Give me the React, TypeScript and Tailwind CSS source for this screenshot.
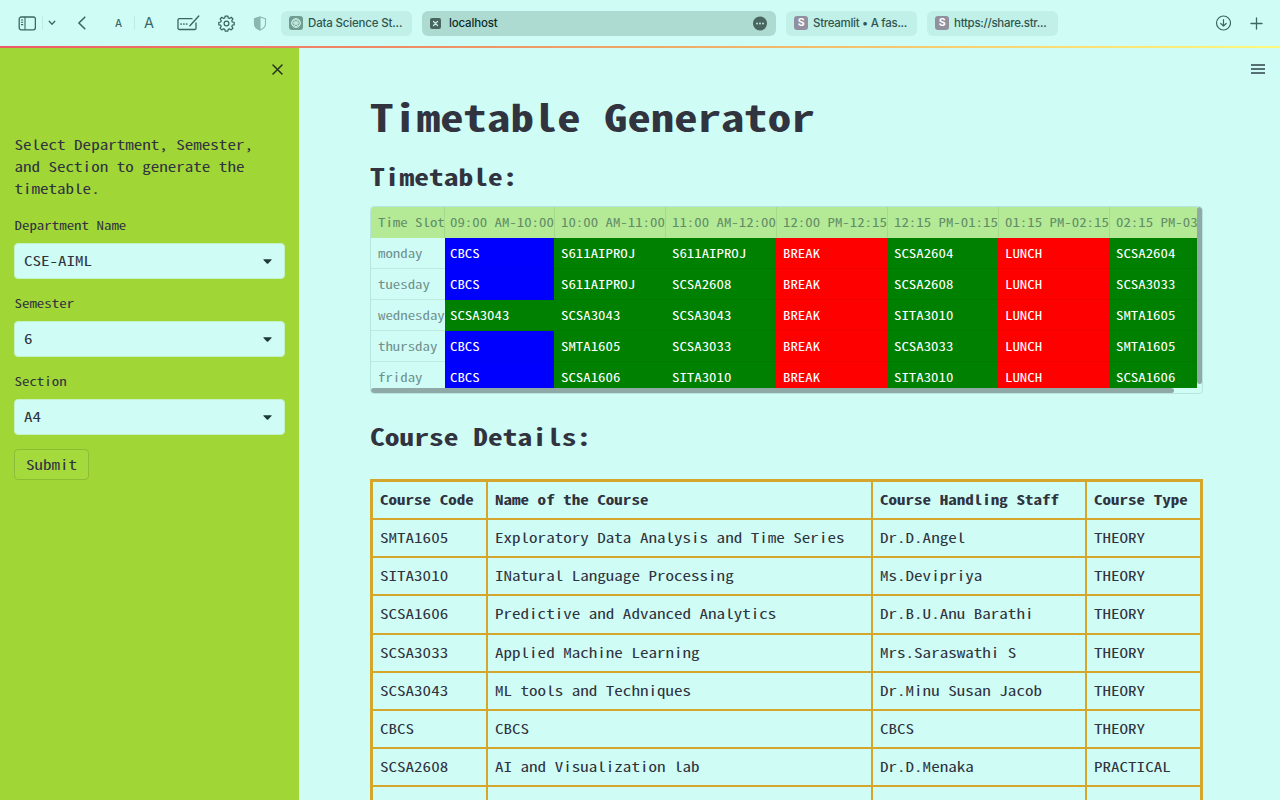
import React from "react";

const MONO = "font-['Noto_Sans_Mono_CJK_SC','Noto_Sans_Mono','DejaVu_Sans_Mono',monospace]";

const slots = [
  "09:00 AM-10:00",
  "10:00 AM-11:00",
  "11:00 AM-12:00",
  "12:00 PM-12:15",
  "12:15 PM-01:15",
  "01:15 PM-02:15",
  "02:15 PM-03",
];

const days: { day: string; cells: string[] }[] = [
  { day: "monday", cells: ["CBCS", "S611AIPROJ", "S611AIPROJ", "BREAK", "SCSA2604", "LUNCH", "SCSA2604"] },
  { day: "tuesday", cells: ["CBCS", "S611AIPROJ", "SCSA2608", "BREAK", "SCSA2608", "LUNCH", "SCSA3033"] },
  { day: "wednesday", cells: ["SCSA3043", "SCSA3043", "SCSA3043", "BREAK", "SITA3010", "LUNCH", "SMTA1605"] },
  { day: "thursday", cells: ["CBCS", "SMTA1605", "SCSA3033", "BREAK", "SCSA3033", "LUNCH", "SMTA1605"] },
  { day: "friday", cells: ["CBCS", "SCSA1606", "SITA3010", "BREAK", "SITA3010", "LUNCH", "SCSA1606"] },
];

const courses = [
  ["SMTA1605", "Exploratory Data Analysis and Time Series", "Dr.D.Angel", "THEORY"],
  ["SITA3010", "INatural Language Processing", "Ms.Devipriya", "THEORY"],
  ["SCSA1606", "Predictive and Advanced Analytics", "Dr.B.U.Anu Barathi", "THEORY"],
  ["SCSA3033", "Applied Machine Learning", "Mrs.Saraswathi S", "THEORY"],
  ["SCSA3043", "ML tools and Techniques", "Dr.Minu Susan Jacob", "THEORY"],
  ["CBCS", "CBCS", "CBCS", "THEORY"],
  ["SCSA2608", "AI and Visualization lab", "Dr.D.Menaka", "PRACTICAL"],
  ["", "", "", ""],
];

function cellColor(value: string) {
  if (value === "CBCS") return "bg-[#0000ff]";
  if (value === "BREAK" || value === "LUNCH") return "bg-[#ff0000]";
  return "bg-[#008000]";
}

/* The monospace face is narrow; squashing it gives the wide code-style letters. */
function T({ children, raised = false }: { children: React.ReactNode; raised?: boolean }) {
  return (
    <span className={"block w-max origin-center scale-y-[0.79] whitespace-nowrap " + (raised ? "-translate-y-px" : "")}>
      {children}
    </span>
  );
}

function Toolbar() {
  return (
    <header className="flex h-[46px] shrink-0 items-center pl-[17px] pr-[17px] font-[Inter,sans-serif] text-[11.5px] font-medium tracking-[-0.015em] text-[#3d6660]">
      <svg width="19" height="15" viewBox="0 0 19 15" fill="none" stroke="currentColor" strokeWidth="1.3">
        <rect x="2.200" y="1" width="16.200" height="12.800" rx="2" />
        <path d="M8 1v12.800M4 4h2.200M4 6.300h2.200M4 8.600h2.200" strokeWidth="1.1" />
      </svg>
      <div className="ml-[6px] h-[14px] w-px bg-[#c0ece5]" />
      <svg className="ml-[5px]" width="8" height="6" viewBox="0 0 8 6" fill="none" stroke="currentColor" strokeWidth="1.3" strokeLinecap="round" strokeLinejoin="round">
        <path d="M1.200 1.300 4 4.300l2.800-3" />
      </svg>
      <svg className="ml-[21px]" width="9" height="14" viewBox="0 0 9 14" fill="none" stroke="currentColor" strokeWidth="1.600" strokeLinecap="round" strokeLinejoin="round">
        <path d="M7.800 1.200 1.900 7l5.900 5.800" />
      </svg>
      <span className="ml-[29px] w-[8px] text-[10px] leading-none">A</span>
      <div className="ml-[11px] h-[14px] w-px bg-[#c0ece5]" />
      <span className="ml-[9px] w-[11px] text-[14.500px] font-normal leading-none">A</span>
      <svg className="ml-[22px]" width="23" height="17" viewBox="0 0 23 17" fill="none" stroke="currentColor" strokeWidth="1.300" strokeLinecap="round">
        <path d="M15 3.700H2.300A1.300 1.300 0 0 0 1 5v8.200a1.300 1.300 0 0 0 1.300 1.300h15.400a1.300 1.300 0 0 0 1.300-1.300V8" />
        <path d="M21.800 1 14.500 9M14.500 9l-1.600 1.800" strokeWidth="1.400" />
        <path d="M4 9h.2M6.800 9h.2M9.600 9h.2" strokeWidth="1.700" />
      </svg>
      <svg className="ml-[18px]" width="17" height="17" viewBox="0 0 17 17" fill="none" stroke="currentColor" strokeWidth="1.250" strokeLinejoin="round">
        <path d="M7.200 1h2.600l.4 1.900 1.300.5 1.700-1.100 1.700 1.700-1.100 1.700.5 1.300 1.900.4v2.400l-1.900.4-.5 1.300 1.100 1.700-1.700 1.700-1.700-1.100-1.300.5-.4 1.900H7.200l-.4-1.900-1.300-.5-1.700 1.100-1.700-1.700 1.100-1.700-.5-1.300L.8 9.800V7.400L2.700 7l.5-1.300-1.100-1.700 1.700-1.700 1.700 1.100 1.300-.5z" />
        <circle cx="8.500" cy="8.500" r="2.400" />
      </svg>
      <svg className="ml-[18px] text-[#8ab8b0]" width="14" height="15" viewBox="0 0 14 15" fill="none" stroke="currentColor" strokeWidth="1.100" strokeLinejoin="round">
        <path d="M7 1 12.500 2.800v5c0 3-2.200 5-5.500 6.300C3.700 12.800 1.500 10.800 1.500 7.800v-5z" />
        <path d="M7 1v13.100C3.700 12.800 1.500 10.800 1.500 7.800v-5z" fill="currentColor" />
      </svg>
      <div className="ml-[14px] flex h-[25px] w-[131px] items-center rounded-[6px] bg-[#c1f0e8] pl-[8px] text-[#2f5650]">
        <svg className="shrink-0" width="14" height="14" viewBox="0 0 14 14">
          <rect width="14" height="14" rx="3" fill="#6f9c90" />
          <g fill="none" stroke="#c9efe5" strokeWidth=".75">
            <ellipse cx="7" cy="5.200" rx="3.600" ry="2.500" />
            <ellipse cx="7" cy="5.200" rx="3.600" ry="2.500" transform="rotate(60 7 7)" />
            <ellipse cx="7" cy="5.200" rx="3.600" ry="2.500" transform="rotate(120 7 7)" />
            <ellipse cx="7" cy="5.200" rx="3.600" ry="2.500" transform="rotate(180 7 7)" />
            <ellipse cx="7" cy="5.200" rx="3.600" ry="2.500" transform="rotate(240 7 7)" />
            <ellipse cx="7" cy="5.200" rx="3.600" ry="2.500" transform="rotate(300 7 7)" />
          </g>
        </svg>
        <span className="ml-[5px] whitespace-nowrap pt-[2px]">Data Science St...</span>
      </div>
      <div className="ml-[10px] flex h-[25px] w-[354px] items-center rounded-[6px] bg-[#addbd2] pl-[8px] pr-[8px] text-[#0c2c28]">
        <svg width="11" height="11" viewBox="0 0 11 11">
          <rect width="11" height="11" rx="2" fill="#48665f" />
          <path d="m3.500 3.500 4 4m0-4-4 4" stroke="#c9efe5" strokeWidth="1.200" strokeLinecap="round" />
        </svg>
        <span className="ml-[8px] pt-[2px]">localhost</span>
        <svg className="ml-auto" width="15" height="15" viewBox="0 0 15 15">
          <circle cx="7" cy="7.500" r="7" fill="#48665f" />
          <g fill="#c9efe5">
            <circle cx="4" cy="7.500" r=".9" />
            <circle cx="7" cy="7.500" r=".9" />
            <circle cx="10" cy="7.500" r=".9" />
          </g>
        </svg>
      </div>
      <div className="ml-[10px] flex h-[25px] w-[131px] items-center rounded-[6px] bg-[#c1f0e8] pl-[8px] text-[#2f5650]">
        <span className="flex size-[14px] shrink-0 items-center justify-center rounded-[3px] bg-[#92909f] text-[10.500px] font-bold text-white">S</span>
        <span className="ml-[5px] whitespace-nowrap pt-[2px] tracking-[-0.025em]">Streamlit • A fas...</span>
      </div>
      <div className="ml-[10px] flex h-[25px] w-[131px] items-center rounded-[6px] bg-[#c1f0e8] pl-[8px] text-[#2f5650]">
        <span className="flex size-[14px] shrink-0 items-center justify-center rounded-[3px] bg-[#92909f] text-[10.500px] font-bold text-white">S</span>
        <span className="ml-[5px] whitespace-nowrap pt-[2px] tracking-[-0.025em]">https://share.str...</span>
      </div>
      <svg className="ml-auto" width="16" height="16" viewBox="0 0 16 16" fill="none" stroke="currentColor" strokeWidth="1.200" strokeLinecap="round" strokeLinejoin="round">
        <circle cx="8.500" cy="8" r="7" />
        <path d="M8.500 4.500v6.600M5.800 8.500 8.500 11.200l2.700-2.700" />
      </svg>
      <svg className="ml-[19px]" width="13" height="13" viewBox="0 0 13 13" fill="none" stroke="currentColor" strokeWidth="1.300" strokeLinecap="round">
        <path d="M6.500 1v11M1 6.500h11" />
      </svg>
    </header>
  );
}

function SelectField({ label, value }: { label: string; value: string }) {
  return (
    <div className="flex h-[78px] flex-col">
      <label className="h-[27px] pl-[0.5px] text-[14.920px] leading-[20px]">
        <T>{label}</T>
      </label>
      <div className="mt-[0.500px] flex h-[36px] items-center justify-between rounded-[4px] border border-[#c3f3c4] bg-[#cffdf6] pl-[9px] pr-[12px] text-[17.050px] leading-[22px]">
        <T raised>{value}</T>
        <svg className="mt-px" width="9" height="5" viewBox="0 0 9 5" fill="#1e3a38">
          <path d="M.6.3h7.800q.5.300.1.800L5.200 4.500q-.7.500-1.400 0L.5 1.100Q.1.600.6.300z" />
        </svg>
      </div>
    </div>
  );
}

function Sidebar() {
  return (
    <aside className="flex w-[299px] shrink-0 flex-col bg-[#a0d636] text-[#31333f]">
      <div className="flex h-[86px] justify-end pr-[16px] pt-[16px]">
        <svg width="11" height="11" viewBox="0 0 11 11" fill="none" stroke="#26331f" strokeWidth="1.500" strokeLinecap="round">
          <path d="m1 1 9 9M10 1l-9 9" />
        </svg>
      </div>
      <div className="flex flex-col pl-[14px] pr-[14px]">
        <div className="h-[81px] pl-[0.5px] text-[17.050px] leading-[22px]">
          <T raised>Select Department, Semester,</T>
          <T raised>and Section to generate the</T>
          <T raised>timetable.</T>
        </div>
        <SelectField label="Department Name" value="CSE-AIML" />
        <SelectField label="Semester" value="6" />
        <SelectField label="Section" value="A4" />
        <button className="flex h-[31px] w-[75px] items-center justify-center rounded-[4px] border border-[#8cbd35] bg-[#a5da3d] text-[17.050px] leading-[22px]">
          <T raised>Submit</T>
        </button>
      </div>
    </aside>
  );
}

function Timetable() {
  const columns = "grid grid-cols-[74px_109px_111px_111px_111px_111px_111px_88px]";
  return (
    <div className="mt-[13px] flex h-[188px] w-[833px] shrink-0 flex-col overflow-hidden rounded-[4px] border border-[#b7e6df] text-[14.840px]">
      <div className="flex h-[181px]">
        <div className="w-[826px] overflow-hidden">
          <div className={columns + " h-[31px] w-[826px] bg-[#b4ea96] leading-[30px] text-[#628d66]"}>
            <div className="overflow-hidden border-r border-[#a5da8d] pl-[7px]">
              <T>Time Slot</T>
            </div>
            {slots.map((slot, i) => (
              <div key={slot} className={"overflow-hidden " + (i === 0 ? "pl-[5px]" : "border-l border-[#a5da8d] pl-[6px]")}>
                <T>{slot}</T>
              </div>
            ))}
          </div>
          {days.map(({ day, cells }) => (
            <div key={day} className={columns + " h-[31px] w-[826px] leading-[30px] text-[#71918f]"}>
              <div className="overflow-hidden border-b border-[#bdebe4] pl-[7px]">
                <T>{day}</T>
              </div>
              {cells.map((cell, i) => (
                <div
                  key={i}
                  className={"border-b border-black/5 text-white " + (i === 0 ? "pl-[5px] " : "pl-[7px] ") + cellColor(cell)}
                >
                  <T>{cell}</T>
                </div>
              ))}
            </div>
          ))}
        </div>
        <div className="h-[177px] w-[5px] rounded-full bg-[#8fa9a7]" />
      </div>
      <div className="h-[5px] w-[803px] shrink-0 rounded-full bg-[#8fa9a7]" />
    </div>
  );
}

function CourseRow({ cells, header = false }: { cells: string[]; header?: boolean }) {
  return (
    <div
      className={
        "grid grid-cols-[115px_385px_214px_113px] leading-[36px] " +
        (header ? "h-[38px] font-bold" : "h-[38.200px]")
      }
    >
      {cells.map((cell, i) => (
        <div key={i} className={"border-b-2 border-[#d4a72c] pl-[7px] " + (i < 3 ? "border-r-2" : "")}>
          <T raised>{cell}</T>
        </div>
      ))}
    </div>
  );
}

export default function App() {
  return (
    <div className="flex h-[800px] w-[1280px] flex-col overflow-hidden bg-[#cffdf6]">
      <Toolbar />
      <div className="h-[2px] shrink-0 bg-linear-to-r from-[#ed5a66] via-[#eda667] to-[#fbfa7d]" />
      <div className={"flex min-h-0 flex-1 text-[#31333f] " + MONO}>
        <Sidebar />
        <main className="flex min-w-0 flex-1 justify-between overflow-hidden pl-[71px] pr-[15px]">
          <div className="flex w-[833px] flex-col">
            <h1 className="mt-[38px] h-[60px] text-[46.800px] font-bold leading-[60px]">
              <T>Timetable Generator</T>
            </h1>
            <h2 className="mt-[13px] h-[34px] text-[29.500px] font-bold leading-[34px]">
              <T>Timetable:</T>
            </h2>
            <Timetable />
            <h2 className="mt-[25px] h-[34px] text-[29.500px] font-bold leading-[34px]">
              <T>Course Details:</T>
            </h2>
            <div className="mt-[26px] w-[833px] shrink-0 border-[3px] border-[#d4a72c] text-[17.060px]">
              <CourseRow header cells={["Course Code", "Name of the Course", "Course Handling Staff", "Course Type"]} />
              {courses.map((cells, i) => (
                <CourseRow key={i} cells={cells} />
              ))}
            </div>
          </div>
          <svg className="mt-[16px]" width="14" height="10" viewBox="0 0 14 10" stroke="#31424a" strokeWidth="1.500">
            <path d="M0 1h14M0 5h14M0 9h14" />
          </svg>
        </main>
      </div>
    </div>
  );
}
